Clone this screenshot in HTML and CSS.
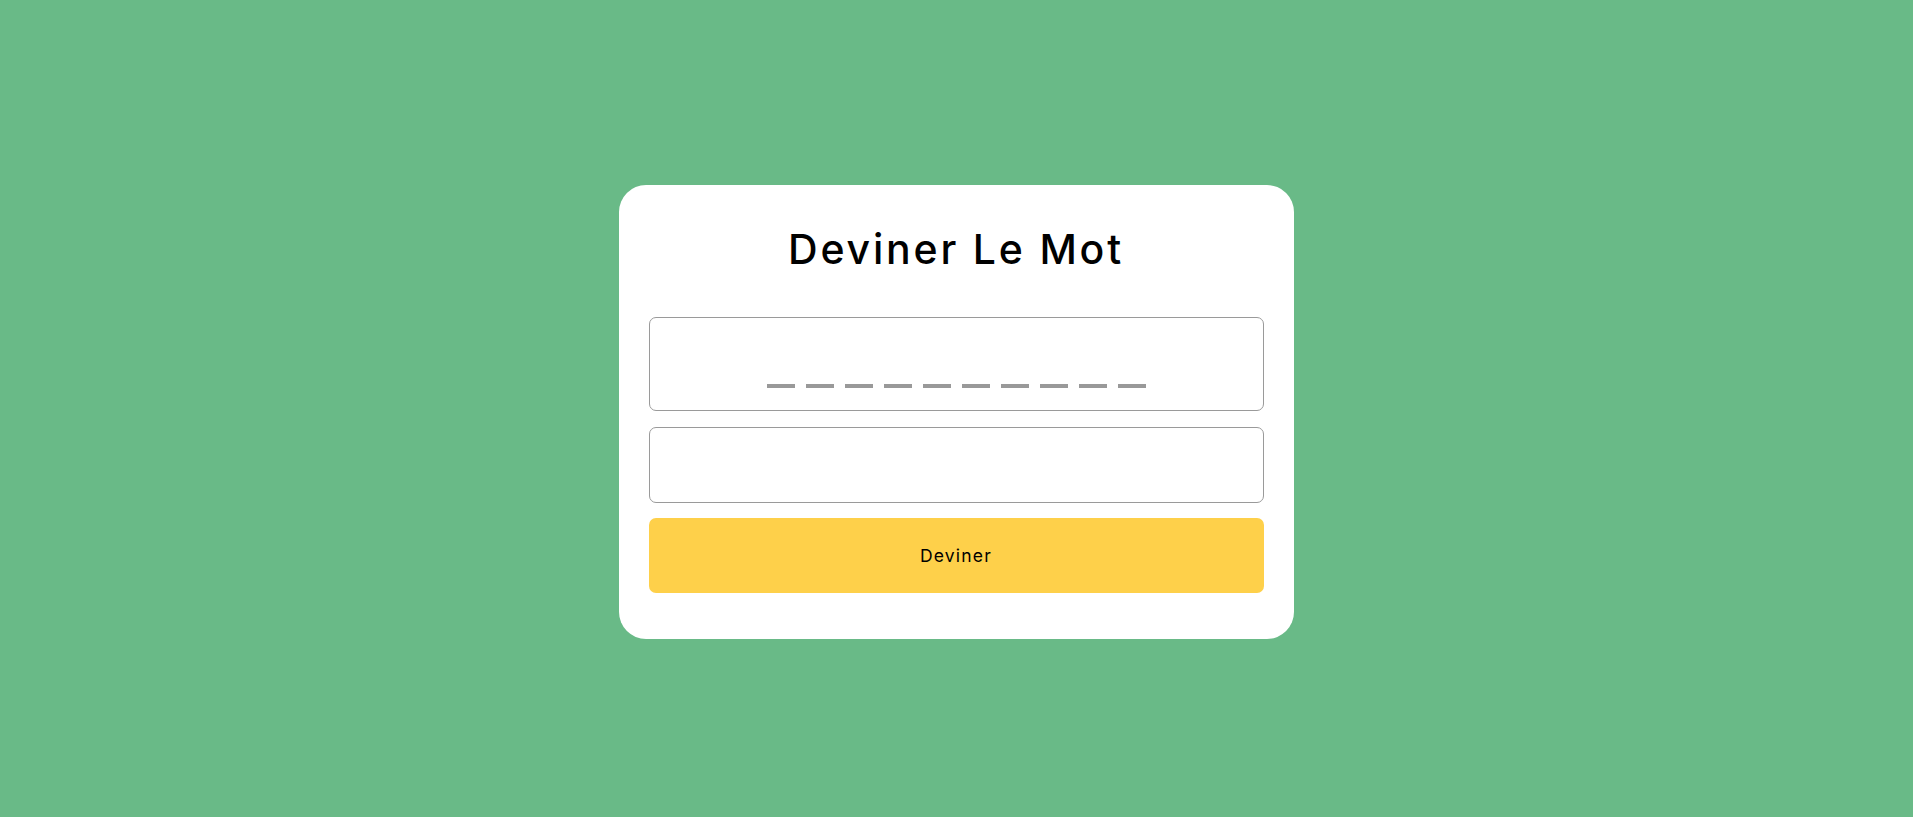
FILE: index.html
```html
<!DOCTYPE html>
<html lang="fr">
<head>
<meta charset="utf-8">
<title>Deviner Le Mot</title>
<link rel="stylesheet" href="styles.css">
</head>
<body>
<main class="page">
  <section class="card">
    <h1 class="title">Deviner Le Mot</h1>
    <div class="word-box">
      <div class="dashes">
        <span class="dash"></span><span class="dash"></span><span class="dash"></span><span class="dash"></span><span class="dash"></span><span class="dash"></span><span class="dash"></span><span class="dash"></span><span class="dash"></span><span class="dash"></span>
      </div>
    </div>
    <input class="guess-input" type="text" aria-label="Lettre">
    <button class="guess-btn" type="button">Deviner</button>
  </section>
</main>
</body>
</html>
```
FILE: styles.css
```css
* { box-sizing: border-box; }
html, body { margin: 0; padding: 0; }
body {
  background: #69ba87;
  font-family: Inter, "Open Sans", sans-serif;
  width: 1913px;
  height: 817px;
  overflow: hidden;
}
.page {
  height: 100%;
  display: flex;
  align-items: flex-start;
  justify-content: center;
  padding-top: 185px;
  padding-right: 1px;
}
.card {
  width: 675px;
  height: 454px;
  background: #ffffff;
  border-radius: 27px;
  padding: 0 30px 46px;
  display: flex;
  flex-direction: column;
}
.title {
  margin: 0;
  height: 132px;
  padding-top: 39px;
  font-size: 41px;
  line-height: 50px;
  font-weight: 500;
  letter-spacing: 2.8px;
  color: #000;
  text-align: center;
}
.word-box {
  height: 95px;
  border: 1px solid #9a9a9a;
  border-radius: 7px;
  display: flex;
  align-items: flex-end;
  justify-content: center;
  padding-bottom: 22px;
}
.dashes {
  display: flex;
  gap: 11px;
  padding-left: 1px;
}
.dash {
  display: block;
  width: 28px;
  height: 4px;
  background: #999999;
}
.guess-input {
  margin-top: 16px;
  height: 76px;
  border: 1px solid #9a9a9a;
  border-radius: 7px;
  background: #fff;
  font: inherit;
  outline: none;
  padding: 0 12px;
}
.guess-btn {
  margin-top: 15px;
  height: 75px;
  border: none;
  border-radius: 7px;
  background: #fed04a;
  color: #000;
  font-family: Inter, "Open Sans", sans-serif;
  font-size: 17.5px;
  font-weight: 400;
  letter-spacing: 1.2px;
  cursor: pointer;
}
```
